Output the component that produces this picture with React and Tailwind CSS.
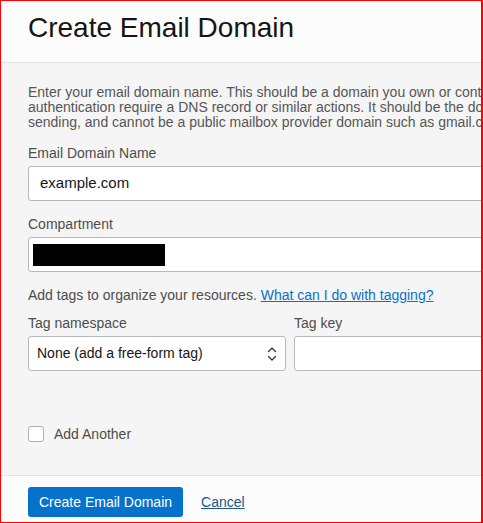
import React from 'react';

const font = { fontFamily: '"Liberation Sans", Arial, sans-serif' };

const SortIcon = () => (
  <svg width="10" height="16" viewBox="0 0 10 16" fill="none" stroke="#3a3a3a" strokeWidth="1.4" strokeLinecap="round" strokeLinejoin="round">
    <path d="M1.5 5.5 L5 2 L8.5 5.5" />
    <path d="M1.5 10.5 L5 14 L8.5 10.5" />
  </svg>
);

const Label = ({ children }) => (
  <div className="text-[14px] leading-[20px] text-[#4d4d4d] mb-[3px]">{children}</div>
);

const App = () => {
  return (
    <div
      className="w-[483px] h-[523px] overflow-hidden border-t border-l border-b border-r-2 border-[#ff0000] bg-[#f5f5f5] flex flex-col"
      style={font}
    >
      {/* Cabecera */}
      <div className="bg-[#fcfcfc] border-b border-[#e3e3e3] pl-[27px] pt-[11px] pb-[18px] shrink-0">
        <h1 className="text-[28px] leading-[32px] text-[#161513] whitespace-nowrap">Create Email Domain</h1>
      </div>

      {/* Formulario */}
      <div className="flex-1 pl-[27px] pt-[22px] overflow-hidden">
        <div className="w-[700px]">
          <p className="text-[14px] leading-[15px] text-[#555555] whitespace-nowrap">
            Enter your email domain name. This should be a domain you own or control, as some features such as<br />
            authentication require a DNS record or similar actions. It should be the domain name you use when<br />
            sending, and cannot be a public mailbox provider domain such as gmail.com.
          </p>

          <div className="mt-[13px]">
            <Label>Email Domain Name</Label>
            <div className="h-[35px] bg-white border border-[#b8b8b8] rounded-[3px] flex items-center pl-[11px] text-[15px] text-[#161513]">
              example.com
            </div>
          </div>

          <div className="mt-[13px]">
            <Label>Compartment</Label>
            <div className="h-[35px] bg-white border border-[#b8b8b8] rounded-[3px] flex items-center pl-[4px]">
              <div className="w-[132px] h-[22px] bg-black" />
            </div>
          </div>

          <div className="mt-[13px] text-[14px] leading-[20px] text-[#4d4d4d] whitespace-nowrap">
            Add tags to organize your resources.{' '}
            <a href="#" className="text-[#0572ce] underline">What can I do with tagging?</a>
          </div>

          <div className="mt-[8px] flex gap-[8px]">
            <div className="w-[258px]">
              <Label>Tag namespace</Label>
              <div className="h-[35px] bg-white border border-[#b8b8b8] rounded-[3px] flex items-center justify-between pl-[8px] pr-[8px] text-[14px] text-[#161513]">
                <span>None (add a free-form tag)</span>
                <SortIcon />
              </div>
            </div>
            <div className="w-[258px]">
              <Label>Tag key</Label>
              <div className="h-[35px] bg-white border border-[#b8b8b8] rounded-[3px]" />
            </div>
          </div>

          <label className="mt-[53px] flex items-center h-[20px] gap-[10px]">
            <span className="w-[16px] h-[16px] bg-white border border-[#b0b0b8] rounded-[3px]" />
            <span className="text-[14px] text-[#4d4d4d]">Add Another</span>
          </label>
        </div>
      </div>

      {/* Botones */}
      <div className="h-[47px] shrink-0 bg-[#fcfcfc] border-t border-[#e3e3e3] pl-[27px] pt-[11px] flex items-start gap-[18px]">
        <button className="h-[30px] px-[11px] bg-[#0572ce] text-white text-[14px] rounded-[3px] whitespace-nowrap">
          Create Email Domain
        </button>
        <a href="#" className="h-[30px] flex items-center text-[14px] text-[#19598a] underline">Cancel</a>
      </div>
    </div>
  );
};

export default App;
